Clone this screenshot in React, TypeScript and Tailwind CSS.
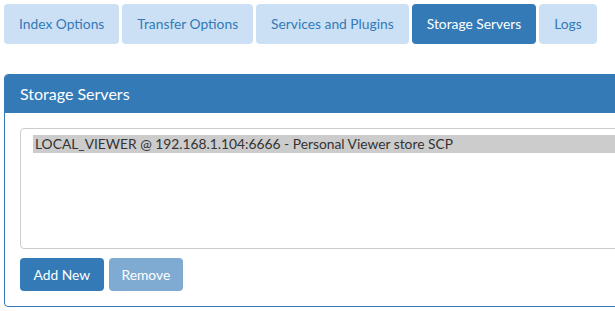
import React from "react";

const tabs = [
  { label: "Index Options", active: false },
  { label: "Transfer Options", active: false },
  { label: "Services and Plugins", active: false },
  { label: "Storage Servers", active: true },
  { label: "Logs", active: false },
];

export default function App() {
  return (
    <div
      className="w-[615px] h-[311px] overflow-hidden bg-white pl-[4px] pt-[4px]"
      style={{ fontFamily: "Lato, 'Open Sans', sans-serif" }}
    >
      <div className="flex gap-[3px]">
        {tabs.map((t) => (
          <div
            key={t.label}
            className={
              t.active
                ? "flex-none whitespace-nowrap rounded-[4px] bg-[#337ab7] text-white px-[15px] h-[40px] flex items-center text-[13.8px] leading-[20px]"
                : "flex-none whitespace-nowrap rounded-[4px] bg-[#cbe0f4] text-[#337ab7] px-[15px] h-[40px] flex items-center text-[13.8px] leading-[20px]"
            }
          >
            {t.label}
          </div>
        ))}
      </div>

      <div className="mt-[30px] w-[660px] border border-[#337ab7] rounded-[4px] overflow-hidden">
        <div className="bg-[#337ab7] text-white text-[16px] leading-[20px] h-[38px] px-[15px] flex items-center">
          Storage Servers
        </div>
        <div className="px-[15px] pt-[15px] pb-[15px]">
          <div className="h-[121px] border border-[#cccccc] rounded-[4px] pt-[6px] pl-[12px]">
            <div className="bg-[#cccccc] text-[#333333] text-[13.8px] leading-[18px] h-[18px] pl-[2px] whitespace-nowrap">
              LOCAL_VIEWER @ 192.168.1.104:6666 - Personal Viewer store SCP
            </div>
          </div>
          <div className="flex gap-[5px] mt-[9px]">
            <button className="whitespace-nowrap bg-[#337ab7] text-white text-[13.8px] leading-[21px] h-[33px] px-[13.5px] rounded-[4px]">
              Add New
            </button>
            <button className="whitespace-nowrap bg-[#7fabd3] text-white text-[13.8px] leading-[21px] h-[33px] px-[13px] rounded-[4px]">
              Remove
            </button>
          </div>
        </div>
      </div>
    </div>
  );
}
